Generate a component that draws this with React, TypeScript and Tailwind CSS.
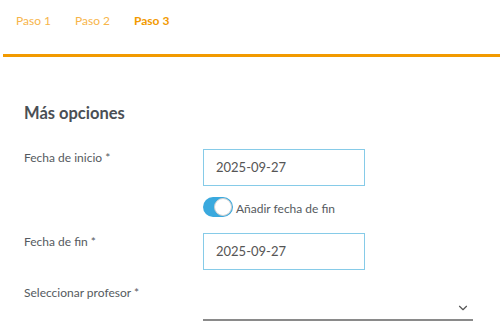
import { ChevronDown } from "lucide-react";

export default function App() {
  return (
    <div
      className="w-[500px] h-[336px] bg-white overflow-hidden"
      style={{ fontFamily: "Lato, 'Noto Sans', sans-serif" }}
    >
      {/* Steps */}
      <div className="h-[54px] flex items-start pl-4 pt-[13px] text-[12px] leading-4">
        <span className="w-[59px] text-[#f7b54a]">Paso 1</span>
        <span className="w-[59px] text-[#f7b54a]">Paso 2</span>
        <span className="text-[#f29a00] font-bold">Paso 3</span>
      </div>
      <div className="h-[3px] ml-[3px] bg-[#f29a00]" />

      <main className="px-6 pt-[46px]">
        <h2 className="text-[16.5px] leading-5 font-bold text-[#4a4f55]">Más opciones</h2>

        <div className="mt-[26px] flex text-[12px] text-[#555a60]">
          <label className="w-[179px] pt-[1px] leading-4">Fecha de inicio *</label>
          <div className="flex flex-col">
            <div className="w-[162px] h-[37px] border border-[#86cbe8] flex items-center px-3 text-[13px] text-[#555]">
              2025-09-27
            </div>
            <div className="mt-[11px] flex items-end gap-[3px]">
              <div className="w-[30px] h-[20px] rounded-full bg-[#3aa9de] flex items-center justify-end">
                <div className="w-[18px] h-[18px] rounded-full bg-white border border-[#d0d0d0] mr-[1px]" />
              </div>
              <span className="leading-4">Añadir fecha de fin</span>
            </div>
          </div>
        </div>

        <div className="mt-[16px] flex text-[12px] text-[#555a60]">
          <label className="w-[179px] pt-[1px] leading-4">Fecha de fin *</label>
          <div className="w-[162px] h-[37px] border border-[#86cbe8] flex items-center px-3 text-[13px] text-[#555]">
            2025-09-27
          </div>
        </div>

        <div className="mt-[15px] flex text-[12px] text-[#555a60]">
          <label className="w-[179px] leading-4">Seleccionar profesor *</label>
        </div>
        <div className="ml-[179px] w-[270px] h-[20px] border-b-2 border-[#8a8a8a] flex items-start justify-end pr-[3px]">
          <ChevronDown className="w-[14px] h-[14px] text-[#555]" strokeWidth={2} />
        </div>
      </main>
    </div>
  );
}
